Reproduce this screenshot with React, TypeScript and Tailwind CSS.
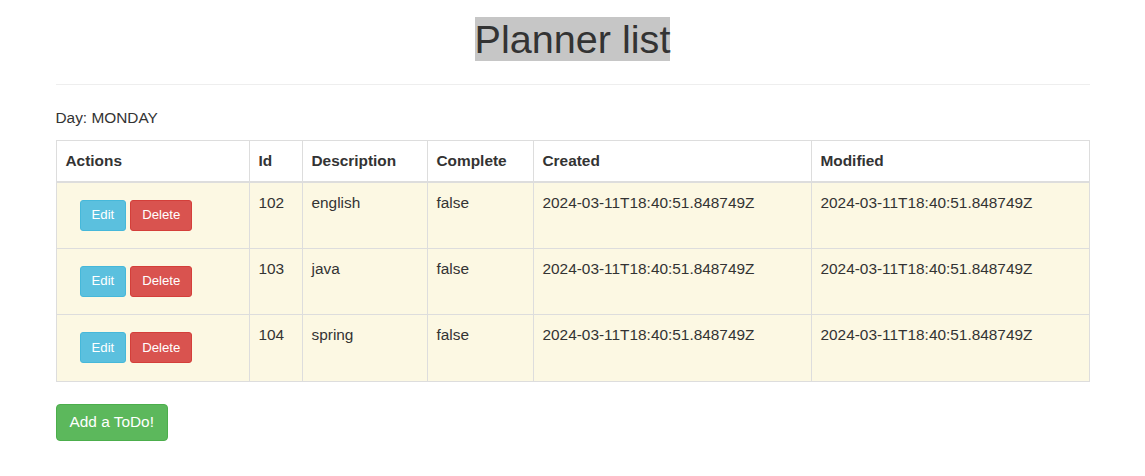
const rows = [
  { id: 102, description: 'english', complete: 'false', created: '2024-03-11T18:40:51.848749Z', modified: '2024-03-11T18:40:51.848749Z' },
  { id: 103, description: 'java', complete: 'false', created: '2024-03-11T18:40:51.848749Z', modified: '2024-03-11T18:40:51.848749Z' },
  { id: 104, description: 'spring', complete: 'false', created: '2024-03-11T18:40:51.848749Z', modified: '2024-03-11T18:40:51.848749Z' },
];

export default function App() {
  const th = 'border border-[#ddd] border-b-2 px-[9px] py-[7px] text-left font-bold align-middle';
  const td = 'border border-[#ddd] px-[9px] py-[9px] align-top';

  return (
    <div className="min-h-screen bg-white text-[#333] text-[15.4px] leading-[22px] font-['Liberation_Sans',Arial,sans-serif]">
      <div className="w-[1034px] mx-auto pt-[17px]">
        <h1 className="text-center text-[39.6px] leading-[45px] font-normal">
          <span className="bg-[#c6c6c6]">Planner list</span>
        </h1>
        <hr className="mt-[22px] border-0 border-t border-[#eee]" />
        <div className="mt-[22px]">Day: MONDAY</div>
        <table className="mt-[11px] w-full border-collapse border border-[#ddd]">
          <thead>
            <tr className="h-[41px]">
              <th className={`${th} w-[193px]`}>Actions</th>
              <th className={`${th} w-[53px]`}>Id</th>
              <th className={`${th} w-[125px]`}>Description</th>
              <th className={`${th} w-[106px]`}>Complete</th>
              <th className={`${th} w-[278px]`}>Created</th>
              <th className={th}>Modified</th>
            </tr>
          </thead>
          <tbody>
            {rows.map(r => (
              <tr key={r.id} className="bg-[#fcf8e3] h-[66.6px]">
                <td className={td}>
                  <div className="flex gap-[4px] pl-[14px] pt-[8px]">
                    <button className="h-[31px] px-[11px] text-[13.2px] text-white bg-[#5bc0de] border border-[#46b8da] rounded-[3px]">Edit</button>
                    <button className="h-[31px] px-[11px] text-[13.2px] text-white bg-[#d9534f] border border-[#d43f3a] rounded-[3px]">Delete</button>
                  </div>
                </td>
                <td className={td}>{r.id}</td>
                <td className={td}>{r.description}</td>
                <td className={td}>{r.complete}</td>
                <td className={td}>{r.created}</td>
                <td className={td}>{r.modified}</td>
              </tr>
            ))}
          </tbody>
        </table>
        <button className="mt-[22px] h-[37px] px-[13px] text-[15.4px] text-white bg-[#5cb85c] border border-[#4cae4c] rounded-[4px]">
          Add a ToDo!
        </button>
      </div>
    </div>
  );
}
